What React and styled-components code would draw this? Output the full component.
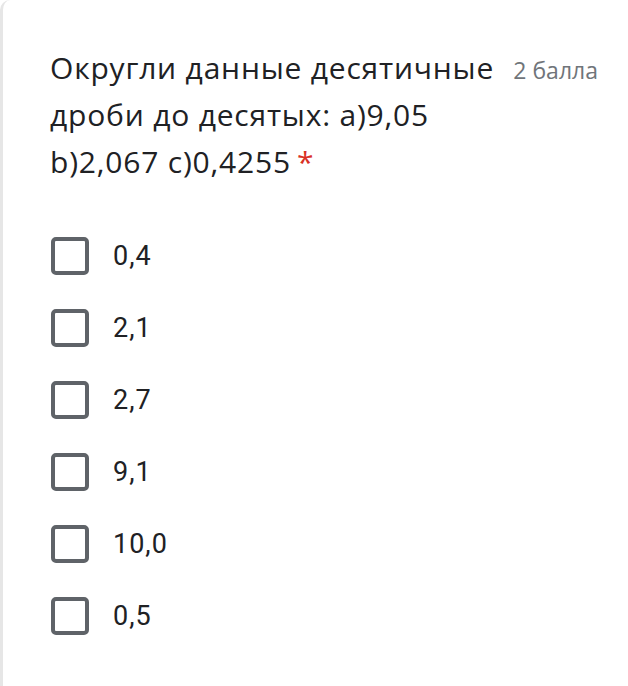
import React from "react";
import styled, { createGlobalStyle } from "styled-components";

const GlobalStyle = createGlobalStyle`
  body {
    margin: 0;
    background: #ffffff;
  }
`;

const Card = styled.div`
  min-height: 686px;
  box-sizing: border-box;
  border-left: 3px solid #e6e6e6;
  border-top-left-radius: 10px;
  padding: 44px 30px 0 47px;
`;

const Header = styled.div`
  display: flex;
  align-items: baseline;
`;

const Title = styled.div`
  flex: 1;
  font-family: "Open Sans", "Liberation Sans", sans-serif;
  font-size: 30px;
  line-height: 47px;
  color: #202124;
  letter-spacing: 0.8px;
`;

const Required = styled.span`
  color: #d93025;
  margin-left: 6px;
`;

const Points = styled.span`
  font-family: "Open Sans", "Liberation Sans", sans-serif;
  font-size: 23px;
  color: #70757a;
  white-space: nowrap;
`;

const List = styled.div`
  margin-top: 35px;
  display: flex;
  flex-direction: column;
`;

const Row = styled.label`
  height: 72px;
  display: flex;
  align-items: center;
  gap: 24px;
`;

const Box = styled.span`
  width: 38px;
  height: 38px;
  box-sizing: border-box;
  margin-left: 1px;
  border: 4px solid #5f6368;
  border-radius: 5px;
  flex-shrink: 0;
`;

const OptionText = styled.span`
  font-family: Roboto, "Liberation Sans", sans-serif;
  font-size: 27px;
  letter-spacing: 1px;
  color: #202124;
`;

const options = ["0,4", "2,1", "2,7", "9,1", "10,0", "0,5"];

const App = () => {
  return (
    <>
      <GlobalStyle />
      <Card>
        <Header>
          <Title>
            Округли данные десятичные дроби до десятых: а)9,05 b)2,067
            c)0,4255<Required>*</Required>
          </Title>
          <Points>2 балла</Points>
        </Header>
        <List>
          {options.map((o) => (
            <Row key={o}>
              <Box />
              <OptionText>{o}</OptionText>
            </Row>
          ))}
        </List>
      </Card>
    </>
  );
};

export default App;
